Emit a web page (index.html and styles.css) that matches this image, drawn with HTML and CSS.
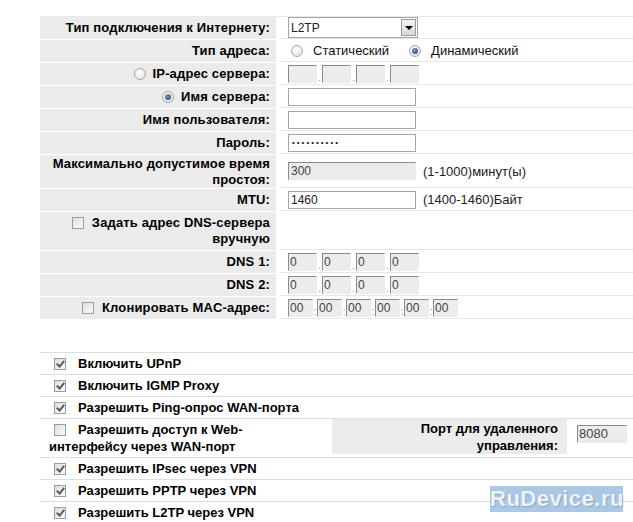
FILE: index.html
```html
<!DOCTYPE html>
<html lang="ru">
<head>
    <meta charset="UTF-8">
    <title>WAN</title>
    <link rel="stylesheet" href="styles.css">
</head>
<body>
<div class="page">
    <div class="form">
        <div class="row">
            <div class="label">Тип подключения к Интернету:</div>
            <div class="value">
                <div class="select"><span>L2TP</span><span class="arrow"></span></div>
            </div>
        </div>
        <div class="row">
            <div class="label">Тип адреса:</div>
            <div class="value">
                <span class="radio"></span><span class="opt-text">Статический</span>
                <span class="radio on second"></span><span class="opt-text">Динамический</span>
            </div>
        </div>
        <div class="row">
            <div class="label"><span class="radio lbl"></span>IP-адрес сервера:</div>
            <div class="value">
                <span class="oct"></span><span class="dot">.</span><span class="oct"></span><span class="dot">.</span><span class="oct"></span><span class="dot">.</span><span class="oct"></span>
            </div>
        </div>
        <div class="row">
            <div class="label"><span class="radio on lbl"></span>Имя сервера:</div>
            <div class="value"><span class="field"></span></div>
        </div>
        <div class="row">
            <div class="label">Имя пользователя:</div>
            <div class="value"><span class="field"></span></div>
        </div>
        <div class="row">
            <div class="label">Пароль:</div>
            <div class="value"><span class="field pass">••••••••••</span></div>
        </div>
        <div class="row tall">
            <div class="label">Максимально допустимое время<br>простоя:</div>
            <div class="value"><span class="field grey">300</span><span class="hint">(1-1000)минут(ы)</span></div>
        </div>
        <div class="row">
            <div class="label">MTU:</div>
            <div class="value"><span class="field">1460</span><span class="hint">(1400-1460)Байт</span></div>
        </div>
        <div class="row dns">
            <div class="label"><span class="box lbl"></span>Задать адрес DNS-сервера<br>вручную</div>
            <div class="value"></div>
        </div>
        <div class="row">
            <div class="label">DNS 1:</div>
            <div class="value">
                <span class="oct">0</span><span class="dot">.</span><span class="oct">0</span><span class="dot">.</span><span class="oct">0</span><span class="dot">.</span><span class="oct">0</span>
            </div>
        </div>
        <div class="row">
            <div class="label">DNS 2:</div>
            <div class="value">
                <span class="oct">0</span><span class="dot">.</span><span class="oct">0</span><span class="dot">.</span><span class="oct">0</span><span class="dot">.</span><span class="oct">0</span>
            </div>
        </div>
        <div class="row">
            <div class="label"><span class="box lbl"></span>Клонировать MAC-адрес:</div>
            <div class="value">
                <span class="mac">00</span><span class="colon">:</span><span class="mac">00</span><span class="colon">:</span><span class="mac">00</span><span class="colon">:</span><span class="mac">00</span><span class="colon">:</span><span class="mac">00</span><span class="colon">:</span><span class="mac">00</span>
            </div>
        </div>
    </div>

    <div class="options">
        <div class="opt"><div class="opt-main"><span class="box on"></span>Включить UPnP</div></div>
        <div class="opt"><div class="opt-main"><span class="box on"></span>Включить IGMP Proxy</div></div>
        <div class="opt"><div class="opt-main"><span class="box on"></span>Разрешить Ping-опрос WAN-порта</div></div>
        <div class="opt web">
            <div class="opt-main"><span class="box"></span>Разрешить доступ к Web-<br>интерфейсу через WAN-порт</div>
            <div class="port-label">Порт для удаленного<br>управления:</div>
            <div class="port-value"><span class="port">8080</span></div>
        </div>
        <div class="opt"><div class="opt-main"><span class="box on"></span>Разрешить IPsec через VPN</div></div>
        <div class="opt"><div class="opt-main"><span class="box on"></span>Разрешить PPTP через VPN</div></div>
        <div class="opt"><div class="opt-main"><span class="box on"></span>Разрешить L2TP через VPN</div></div>
    </div>

    <div class="watermark">RuDevice.ru</div>
</div>
</body>
</html>
```

FILE: styles.css
```css
body {
    margin: 0;
    font-family: "Liberation Sans", Arial, sans-serif;
    font-size: 13px;
    color: #000;
    background: #fff;
}
.page {
    position: relative;
    width: 633px;
    height: 522px;
    overflow: hidden;
    padding: 16px 0 0 40px;
    box-sizing: border-box;
}

/* top table */
.form {
    border-top: 1px solid #e8e8e8;
}
.row {
    display: flex;
    min-height: 22px;
    margin-bottom: 1px;
}
.row.tall {
    min-height: 33px;
}
.row.dns {
    min-height: 38px;
}
.label {
    width: 236px;
    flex: none;
    box-sizing: border-box;
    padding: 0 6px 0 8px;
    background: #ebebeb;
    font-weight: bold;
    text-align: right;
    line-height: 16px;
    letter-spacing: 0.15px;
    display: flex;
    align-items: center;
    justify-content: flex-end;
}
.row.dns .label {
    display: block;
    padding-top: 3px;
}
.value {
    flex: 1;
    margin-left: 4px;
    padding-left: 8px;
    border-bottom: 1px solid #e6e6e6;
    display: flex;
    align-items: center;
}

.select {
    width: 130px;
    height: 21px;
    box-sizing: border-box;
    border: 1px solid #a4a4a4;
    display: flex;
    align-items: center;
    justify-content: space-between;
    padding-left: 2px;
    font-size: 12px;
    color: #222;
}
.arrow {
    width: 15px;
    height: 17px;
    margin-right: 1px;
    box-sizing: border-box;
    border: 1px solid #9a9a9a;
    background: linear-gradient(#f4f4f4, #d6d6d6);
    position: relative;
}
.arrow::after {
    content: "";
    position: absolute;
    left: 3px;
    top: 6px;
    border-left: 4px solid transparent;
    border-right: 4px solid transparent;
    border-top: 4px solid #000;
}

.radio {
    width: 12px;
    height: 12px;
    box-sizing: border-box;
    border-radius: 50%;
    border: 1px solid #a8a8a8;
    background: radial-gradient(circle at 40% 35%, #fff, #dcdcdc);
    display: inline-block;
    flex: none;
    margin: 0 10px 0 3px;
    position: relative;
}
.radio.on::after {
    content: "";
    position: absolute;
    left: 2px;
    top: 2px;
    width: 6px;
    height: 6px;
    border-radius: 50%;
    background: radial-gradient(circle at 40% 35%, #7d9cc0, #223a5c);
}
.radio.second {
    margin-left: 20px;
}
.radio.lbl {
    margin: 0 7px 0 0;
}
.opt-text {
    color: #111;
}

.field {
    width: 128px;
    height: 18px;
    box-sizing: border-box;
    border: 1px solid #a4a4a4;
    font-size: 12px;
    line-height: 16px;
    padding-left: 2px;
    color: #222;
    display: inline-block;
}
.field.pass {
    font-size: 8px;
    letter-spacing: 2px;
    line-height: 16px;
    padding-left: 3px;
}
.field.grey {
    background: #ebebeb;
    border-color: #ebebeb;
    border-top-color: #8a8a8a;
    border-left-color: #8a8a8a;
    color: #444;
}
.hint {
    margin-left: 7px;
    color: #222;
}

.oct, .mac, .port {
    height: 18px;
    box-sizing: border-box;
    background: #ececec;
    border: 1px solid #ececec;
    border-top-color: #8a8a8a;
    border-left-color: #8a8a8a;
    font-size: 12px;
    line-height: 16px;
    padding-left: 1px;
    color: #444;
    display: inline-block;
}
.oct {
    width: 29px;
}
.mac {
    width: 25px;
}
.dot, .colon {
    color: #999;
    font-size: 11px;
    text-align: center;
    align-self: flex-end;
    line-height: 14px;
}
.dot {
    width: 5px;
}
.colon {
    width: 4px;
}

.box {
    width: 12px;
    height: 12px;
    box-sizing: border-box;
    border: 1px solid #9c9c9c;
    background: linear-gradient(135deg, #dedede, #fafafa);
    display: inline-block;
    vertical-align: -2px;
    position: relative;
}
.box.on::after {
    content: "";
    position: absolute;
    left: 3px;
    top: 0;
    width: 3px;
    height: 6px;
    border-right: 2px solid #4e5e6e;
    border-bottom: 2px solid #4e5e6e;
    transform: rotate(40deg);
}
.box.lbl {
    margin-right: 8px;
}

/* bottom table */
.options {
    margin-top: 33px;
    border-top: 1px solid #dedede;
}
.opt {
    display: flex;
    min-height: 21px;
    border-bottom: 1px solid #dedede;
}
.opt-main {
    padding: 2px 0 0 9px;
    font-weight: bold;
    line-height: 17px;
}
.opt-main .box {
    margin: 0 12px 0 5px;
}
.opt.web {
    min-height: 36px;
}
.opt.web .opt-main {
    width: 292px;
    flex: none;
    box-sizing: border-box;
}
.port-label {
    width: 235px;
    flex: none;
    box-sizing: border-box;
    background: #ebebeb;
    font-weight: bold;
    text-align: right;
    line-height: 17px;
    padding: 1px 9px 0 0;
    margin-bottom: 3px;
}
.port-value {
    padding: 6px 0 0 10px;
}
.port {
    width: 50px;
    font-size: 13px;
}

.watermark {
    position: absolute;
    left: 490px;
    top: 486px;
    width: 133px;
    height: 26px;
    background: #a9c8e6;
    color: #edf2f7;
    font-weight: bold;
    font-size: 22px;
    line-height: 26px;
    text-align: center;
    letter-spacing: 0.5px;
    text-shadow: 1px 1px 1px #8aa5c0;
}
```
